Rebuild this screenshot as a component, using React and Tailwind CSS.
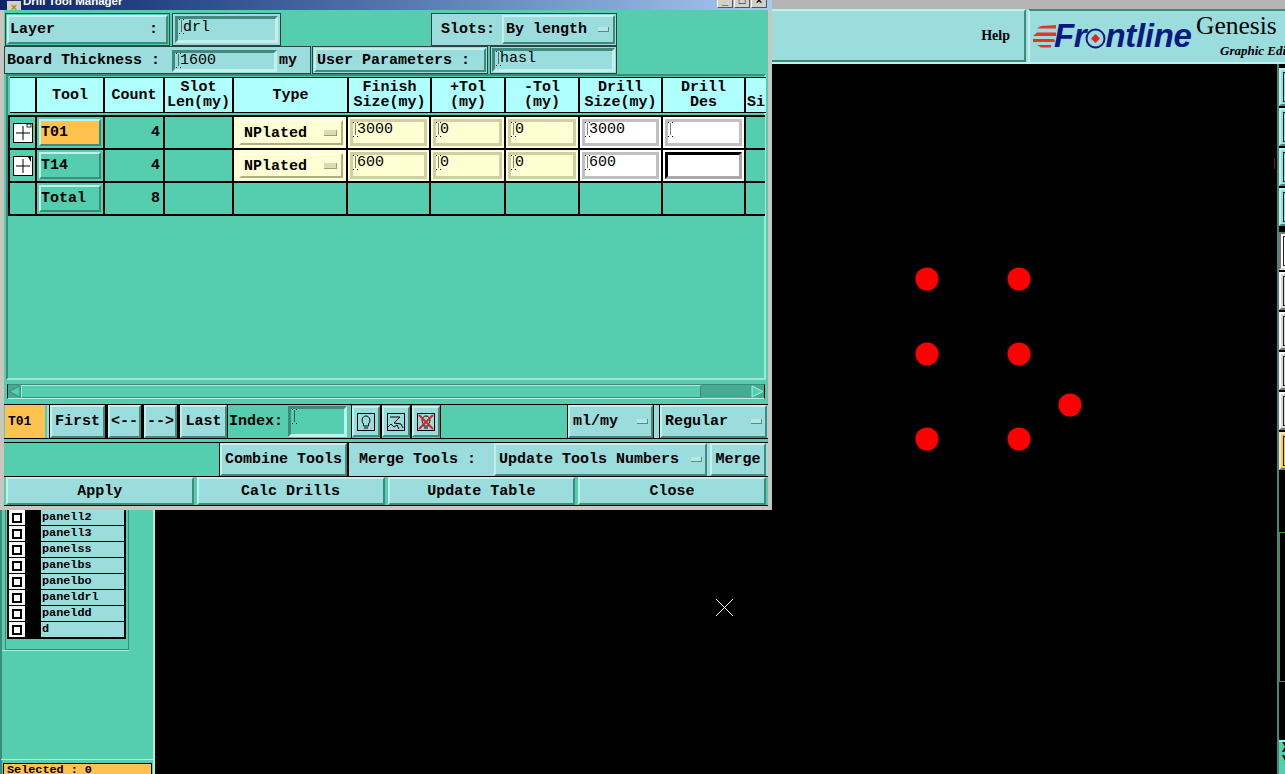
import React from 'react';

// bevel styles shared by the whole Motif-looking UI
const raised = 'border-2 border-t-[#c4f0ec] border-l-[#c4f0ec] border-r-[#3f8a7c] border-b-[#3f8a7c] bg-[#9bdcdc]';
const sunken = 'border-[3px] border-t-[#3f8a7c] border-l-[#3f8a7c] border-r-[#c4f0ec] border-b-[#c4f0ec]';
const cellGrid = 'grid-cols-[25px_66px_58px_67px_112px_81px_73px_72px_81px_81px_20px]';

const Caret = () => (
  <svg width="5" height="16" viewBox="0 0 5 16" className="shrink-0 -mr-[1px]">
    <path d="M0 .5h1M4 .5h1M2 2h1M2 4h1M2 6h1M2 8h1M2 10h1M2 12h1M0 14.5h1M4 14.5h1" stroke="#000" />
  </svg>
);

const Btn = ({ children, className = '' }) => (
  <div className={`${raised} flex items-center justify-center whitespace-nowrap ${className}`}>{children}</div>
);

const Dash = ({ className = '' }) => (
  <span className={`inline-block w-[11px] h-[5px] bg-[#b9e6e3] border-b border-r border-[#4e8f86] ${className}`} />
);

const Field = ({ value, className = '' }) => (
  <div className={`${sunken} flex items-start text-[15px] font-normal leading-[17px] pl-[1px] ${className}`}>
    <Caret />
    <span>{value}</span>
  </div>
);

const PlusBox = ({ mark }) => (
  <svg width="20" height="20" viewBox="0 0 20 20">
    <rect x="0.5" y="0.5" width="19" height="19" fill="#fff" stroke="#000" />
    <path d="M10 3v14M3 10h14" stroke="#000" />
    {mark === 'o' ? <rect x="14" y="1" width="4" height="3" fill="#fff" stroke="#000" strokeWidth="0.8" /> : <path d="M15 1h3v5z" fill="#000" />}
  </svg>
);

const TableRow = ({ tool, count, active, mark, thick }) => (
  <>
    <div className="bg-[#54ceae] flex items-center justify-center"><PlusBox mark={mark} /></div>
    <div className="bg-[#54ceae] p-[2px]">
      <div className={`${raised} h-full flex items-center ${active ? '!bg-[#ffc34d]' : '!bg-[#54ceae]'}`}>{tool}</div>
    </div>
    <div className="bg-[#54ceae] text-right pr-[3px] pt-[1px] leading-[30px]">{count}</div>
    <div className="bg-[#54ceae]" />
    <div className="bg-[#fffdd2] pt-[3px] pb-[3px] pl-[5px] pr-[3px]">
      <div className="border-2 border-t-[#fffff0] border-l-[#fffff0] border-r-[#b0ae88] border-b-[#b0ae88] h-full flex items-center justify-between pl-[3px] pr-[4px] pt-[1px]">
        NPlated
        <span className="inline-block w-[13px] h-[6px] bg-[#dcdab8] border-b border-r border-[#a09e78]" />
      </div>
    </div>
    {[tool === 'T01' ? '3000' : '600', '0', '0'].map((v, i) => (
      <div key={i} className="bg-[#fffdd2] p-[2px]">
        <div className="border-[3px] border-[#d0cea6] h-full flex items-start font-normal leading-[15px]">
          <Caret /><span>{v}</span>
        </div>
      </div>
    ))}
    <div className="bg-white p-[2px]">
      <div className="border-[3px] border-[#c0c0c0] h-full flex items-start font-normal leading-[15px]">
        <Caret /><span>{tool === 'T01' ? '3000' : '600'}</span>
      </div>
    </div>
    <div className="bg-white p-[2px]">
      <div className={`border-[3px] h-full flex items-start ${thick ? 'border-t-[#000] border-l-[#000] border-r-[#aaa] border-b-[#aaa]' : 'border-[#c0c0c0]'}`}>
        {!thick && <Caret />}
      </div>
    </div>
    <div className="bg-[#54ceae]" />
  </>
);

const headers = [
  [''], ['Tool'], ['Count'], ['Slot', 'Len(my)'], ['Type'], ['Finish', 'Size(my)'],
  ['+Tol', '(my)'], ['-Tol', '(my)'], ['Drill', 'Size(my)'], ['Drill', 'Des'],
];

const IconBtn = ({ children }) => (
  <div className="border-x border-black flex py-[1px]">
    <Btn className="w-[28px] h-full">{children}</Btn>
  </div>
);

const Bulb = ({ crossed }) => (
  <svg width="18" height="18" viewBox="0 0 18 18">
    <rect x="0.5" y="0.5" width="17" height="17" fill="none" stroke="#000" />
    <path d="M6.500 13V11C4 8 5 3 9 3s5 5 2.500 8v2zM7 15h4" fill="none" stroke="#000" />
    {crossed && <path d="M2 2l14 14M16 2L2 16" stroke="#e02020" strokeWidth="2" />}
  </svg>
);

const DrillWindow = () => (
  <div className="absolute left-0 top-0 w-[772px] h-[510px] bg-[#54ceae] border-x-[4px] border-b-[4px] border-[#c8c6be] flex flex-col text-[15px] font-bold leading-none text-black">
    {/* title bar, window sits partly above the screen */}
    <div className="h-[10px] -mx-[4px] relative overflow-hidden bg-gradient-to-r from-[#0a246a] to-[#a6caf0] flex items-end shrink-0 font-['Liberation_Sans',sans-serif] font-bold">
      <div className="w-[14px] h-[12px] ml-[7px] mb-[-3px] bg-[#d4d0c8] text-[#b08010] text-[11px] leading-[12px] text-center shrink-0">×</div>
      <span className="ml-[2px] text-white text-[11.500px] leading-[13px] mb-[2px]">Drill Tool Manager</span>
      <div className="ml-auto mr-[5px] flex gap-[1px] mb-[2px]">
        {['_', '□', '×'].map(c => (
          <div key={c} className="w-[16px] h-[14px] bg-[#d4d0c8] border border-r-[#555] border-b-[#555] border-t-white border-l-white text-[11px] leading-[10px] text-center">{c}</div>
        ))}
      </div>
    </div>

    <div className="h-[3px] shrink-0" />

    <div className="h-[33px] flex shrink-0 pl-[1px]">
      <div className="w-[165px] border border-black/60 p-[1px] bg-[#54ceae]">
        <Btn className="h-full !justify-between px-[1px] pr-[8px]"><span>Layer</span><span>:</span></Btn>
      </div>
      <div className="w-[109px] ml-[2px] border border-black/70 bg-[#9bdcdc] p-[2px]">
        <Field value="drl" className="h-full" />
      </div>
      <div className="w-[186px] ml-[150px] border border-black/70 bg-[#9bdcdc] flex items-stretch p-[1px] pl-[9px]">
        <span className="self-center mr-[7px] whitespace-nowrap">Slots:</span>
        <Btn className="flex-1 !justify-between px-[2px]"><span>By length</span><Dash className="mr-[2px]" /></Btn>
      </div>
    </div>

    <div className="h-[28px] flex shrink-0">
      <div className="w-[307px] border border-black/70 bg-[#9bdcdc] flex items-center pl-[2px] pt-[1px]">
        <span className="whitespace-nowrap">Board Thickness :</span>
        <Field value="1600" className="w-[105px] h-[22px] ml-[12px] !leading-[15px]" />
        <span className="ml-[2px]">my</span>
      </div>
      <div className="w-[176px] ml-[1px] border border-black/70 bg-[#9bdcdc] p-[1px]">
        <Btn className="h-full !justify-start pl-[1px]">User Parameters :</Btn>
      </div>
      <div className="w-[127px] ml-[2px] border border-black/70 bg-[#9bdcdc] p-[1px]">
        <Field value="hasl" className="h-full !leading-[15px]" />
      </div>
    </div>

    {/* tool table */}
    <div className="h-[306px] mx-[2px] shrink-0 border-2 border-t-[#3f8a7c] border-l-[#3f8a7c] border-r-[#9fe8d6] border-b-[#9fe8d6] pt-[1px]">
      <div className="ml-[2px] w-[756px] h-[36px] bg-black border-y border-black overflow-hidden flex gap-[2px] text-center leading-[15px] font-bold">
        {[25, 66, 58, 67, 113, 81, 72, 72, 81, 81].map((w, i) => (
          <div key={i} className="bg-[#b0ffff] flex flex-col justify-center shrink-0" style={{ width: w }}>
            {headers[i].map(t => <div key={t} className="whitespace-nowrap -mx-[2px]">{t}</div>)}
          </div>
        ))}
        <div className="bg-[#b0ffff] flex-1 pt-[17px] pl-[1px] text-left">Si</div>
      </div>
      <div className={`grid ${cellGrid} grid-rows-[31px_31px_31px] gap-[2px] bg-black border-y-2 border-l-2 border-black w-[757px] mt-[2px] overflow-hidden`}>
        <TableRow tool="T01" count="4" active mark="o" />
        <TableRow tool="T14" count="4" mark="n" thick />
        <div className="bg-[#54ceae]" />
        <div className="bg-[#54ceae] p-[2px]"><div className={`${raised} !bg-[#54ceae] h-full flex items-center`}>Total</div></div>
        <div className="bg-[#54ceae] text-right pr-[3px] pt-[1px] leading-[30px]">8</div>
        {Array.from({ length: 8 }).map((_, i) => <div key={i} className="bg-[#54ceae]" />)}
      </div>
    </div>

    {/* scrollbar */}
    <div className="h-[24px] shrink-0 px-[3px] pt-[4px]">
      <div className="h-[15px] bg-[#45ab93] border border-t-[#3f8a7c] border-b-[#c4f0ec] flex items-stretch">
        <svg width="13" height="13" viewBox="0 0 13 13" className="shrink-0"><path d="M1 6.500L12 1v11z" fill="#54ceae" stroke="#3f8a7c" /></svg>
        <div className="w-[680px] bg-[#54ceae] border border-t-[#a8f0dc] border-l-[#a8f0dc] border-r-[#3f8a7c] border-b-[#3f8a7c]" />
        <div className="flex-1" />
        <svg width="13" height="13" viewBox="0 0 13 13" className="shrink-0"><path d="M12 6.500L1 1v11z" fill="#54ceae" stroke="#a8f0dc" /></svg>
      </div>
    </div>

    {/* navigation row */}
    <div className="h-[35px] shrink-0 flex border-y border-black">
      <div className="w-[40px] ml-[1px] bg-[#ffc34d] text-[13px] flex items-center pl-[3px]">T01</div>
      <div className="ml-[2px] flex gap-[3px] pl-[1px] pr-[1px] bg-black border-l-[2px] border-l-[#9bdcdc]">
        {[['First', 55], ['<--', 33], ['-->', 33], ['Last', 47]].map(([t, w]) => (
          <div key={t} style={{ width: w }} className="flex">
            <Btn className="w-full">{t}</Btn>
          </div>
        ))}
      </div>
      <div className="flex items-center ml-[1px] gap-[5px] pr-[4px] bg-[#54ceae]">
        <span>Index:</span>
        <Field value="" className="w-[59px] h-[31px]" />
      </div>
      <IconBtn><Bulb /></IconBtn>
      <IconBtn>
        <svg width="18" height="18" viewBox="0 0 18 18">
          <rect x="0.5" y="0.5" width="17" height="17" fill="none" stroke="#000" />
          <path d="M3 4h10l-6 6 7 1 2 4M1 14l3-3 3 3 3-2 2 4" fill="none" stroke="#000" />
        </svg>
      </IconBtn>
      <IconBtn><Bulb crossed /></IconBtn>
      <div className="flex-1" />
      <div className="flex bg-[#9bdcdc] border-l border-black pr-[1px]">
        <Btn className="w-[85px] !justify-between px-[3px]"><span>ml/my</span><Dash /></Btn>
        <div className="w-[7px] bg-[#9bdcdc] border-x border-black" />
        <Btn className="w-[107px] !justify-between px-[3px]"><span>Regular</span><Dash /></Btn>
      </div>
    </div>

    <div className="h-[3px] shrink-0" />

    <div className="h-[34px] shrink-0 flex border-t border-black">
      <div className="w-[216px]" />
      <Btn className="w-[127px] outline outline-1 outline-black">Combine Tools</Btn>
      <div className="flex-1 ml-[1px] bg-[#9bdcdc] flex items-stretch pl-[10px] border-l border-black pr-[2px]">
        <span className="self-center w-[135px] shrink-0">Merge Tools :</span>
        <Btn className="w-[213px] !justify-between pl-[3px] pr-[3px]"><span>Update Tools Numbers</span><Dash /></Btn>
        <Btn className="flex-1 ml-[3px] px-0">Merge</Btn>
      </div>
    </div>

    <div className="h-[30px] shrink-0 border-y border-black flex gap-[3px] px-[2px]">
      {['Apply', 'Calc Drills', 'Update Table', 'Close'].map(t => (
        <Btn key={t} className="flex-1">{t}</Btn>
      ))}
    </div>
  </div>
);

const layers = ['panell2', 'panell3', 'panelss', 'panelbs', 'panelbo', 'paneldrl', 'paneldd', 'd'];

const LeftPanel = () => (
  <div className="w-[155px] shrink-0 bg-[#54ceae] border-r-2 border-r-[#a8f0dc] border-l-2 border-l-[#3f8a7c] flex flex-col">
    {/* layer list runs on under the dialog, only the tail is visible */}
    <div className="mt-[446px] w-[124px] ml-[3px] h-[140px] border-x border-b border-[#3f8a7c] pl-[1px]">
      <div className="w-[119px] bg-black pb-[1px] pr-[2px]">
        {layers.map(l => (
          <div key={l} className="h-[16px] flex items-stretch pb-[1px]">
            <div className="w-[16px] h-[15px] bg-white flex items-center justify-center ml-[2px] shrink-0">
              <div className="w-[10px] h-[10px] border-[2px] border-black bg-white" />
            </div>
            <div className="ml-[16px] flex-1 bg-[#9bdcdc] text-[11.800px] font-bold leading-[15px] pl-[1px]">{l}</div>
          </div>
        ))}
      </div>
    </div>
    <div className="h-[1px] w-[127px] bg-[#a8f0dc]" />
    <div className="flex-1" />
    <div className="h-[1px] bg-[#a8f0dc] -ml-[1px]" />
    <div className="h-[3px]" />
    <div className="h-[11px] bg-[#ffc34d] border-t border-x border-black ml-[1px] mr-[1px] overflow-hidden text-[11.800px] font-bold leading-[12px] pl-[3px]">Selected : 0</div>
  </div>
);

const ToolButton = ({ className }) => (
  <div className={`h-[38px] border-t-2 border-l-2 border-b-2 pl-[2px] pt-[2px] pb-[2px] ${className}`}>
    <div className="h-full border-l border-t border-b border-[#222]" />
  </div>
);

const RightBar = () => (
  <div className="w-[8px] shrink-0 bg-black border-l-2 border-[#3f8a7c] flex flex-col">
    <div className="h-[4px]" />
    {[0, 1, 2, 3].map(i => (
      <ToolButton key={i} className="mb-[2px] bg-[#9bdcdc] border-t-[#c4f0ec] border-l-[#c4f0ec] border-b-[#3f8a7c]" />
    ))}
    <ToolButton className="mt-[4px] bg-white border-t-[#777] border-l-[#777] border-b-[#ddd]" />
    {[0, 1, 2, 3].map(i => (
      <ToolButton key={i} className="mt-[2px] bg-[#d6d6d6] border-t-white border-l-white border-b-[#777]" />
    ))}
    <ToolButton className="mt-[2px] bg-[#f0c870] border-t-[#fbe7b8] border-l-[#fbe7b8] border-b-[#777]" />
    <div className="h-[62px]" />
    <div className="h-[150px] border-y border-l border-[#4e8a40]" />
    <div className="flex-1" />
    <div className="h-[34px] bg-[#54ceae] border-t-2 border-[#a8f0dc] text-[14px] font-bold leading-[13px] pl-[3px] overflow-hidden">X<br />Y</div>
  </div>
);

const Canvas = () => (
  <svg viewBox="155 64 1122 710" className="flex-1 min-w-0 h-full block bg-black">
    {[[927, 279], [1019, 279], [927, 354], [1019, 354], [1070, 405], [927, 439], [1019, 439]].map(([cx, cy]) => (
      <circle key={`${cx}-${cy}`} cx={cx} cy={cy} r="11.500" fill="#ff0000" />
    ))}
    <path d="M716 599l17 17M733 599l-17 17" stroke="#fff" strokeWidth="1" />
    <path d="M1274.500 158v11" stroke="#8a1010" />
  </svg>
);

const Logo = () => (
  <div className="flex-1 ml-[2px] bg-[#9bdcdc] border-t-2 border-t-[#3f8a7c] border-l-2 border-l-[#c4f0ec] flex items-center overflow-hidden relative">
    <svg width="24" height="24" viewBox="0 0 24 24" className="ml-[2px] mt-[-2px] shrink-0">
      <path d="M9 2l15-1v3.500H5zM5 8.500h19V12H1zM1 15h21l1 3H1zM5 21h14v2.500H9z" fill="#e8332a" />
    </svg>
    <div className="font-['Liberation_Sans',sans-serif] italic font-bold text-[33px] text-[#0a1a80] tracking-[-0.3px] leading-none flex items-center mt-[-2px] ml-[-2px] whitespace-nowrap">
      <span>Fr</span>
      <svg width="21" height="21" viewBox="0 0 21 21" className="mt-[5px] mx-[-1px]">
        <circle cx="10.500" cy="10.500" r="9" fill="none" stroke="#0a1a80" strokeWidth="2" />
        <path d="M10.500 6l4.500 4.500-4.500 4.500L6 10.500z" fill="#e8202a" />
      </svg>
      <span>ntline</span>
    </div>
    <div className="absolute left-[166px] top-[1px] font-['Liberation_Serif',serif] text-[25.500px] leading-[28px] text-black whitespace-nowrap">Genesis</div>
    <div className="absolute left-[190px] top-[32px] font-['Liberation_Serif',serif] italic font-bold text-[13px] leading-[15px] text-black whitespace-nowrap">Graphic Editor</div>
  </div>
);

export default function App() {
  return (
    <div className="relative w-[1285px] h-[774px] bg-black overflow-hidden flex flex-col font-['Liberation_Mono',monospace]">
      <div className="h-[9px] bg-[#b4b4b4] shrink-0" />
      <div className="h-[55px] shrink-0 flex pl-[772px] bg-[#9bdcdc] border-b-2 border-b-[#c4f0ec]">
        <div className="w-[254px] h-[53px] border-t-2 border-t-[#c4f0ec] border-r-2 border-r-[#3f8a7c] border-b-2 border-b-[#3f8a7c] flex items-center justify-end pr-[14px] bg-[#9bdcdc] font-['Liberation_Serif',serif] font-bold text-[14px]">Help</div>
        <Logo />
      </div>
      <div className="flex-1 flex min-h-0">
        <LeftPanel />
        <Canvas />
        <RightBar />
      </div>
      <DrillWindow />
    </div>
  );
}
